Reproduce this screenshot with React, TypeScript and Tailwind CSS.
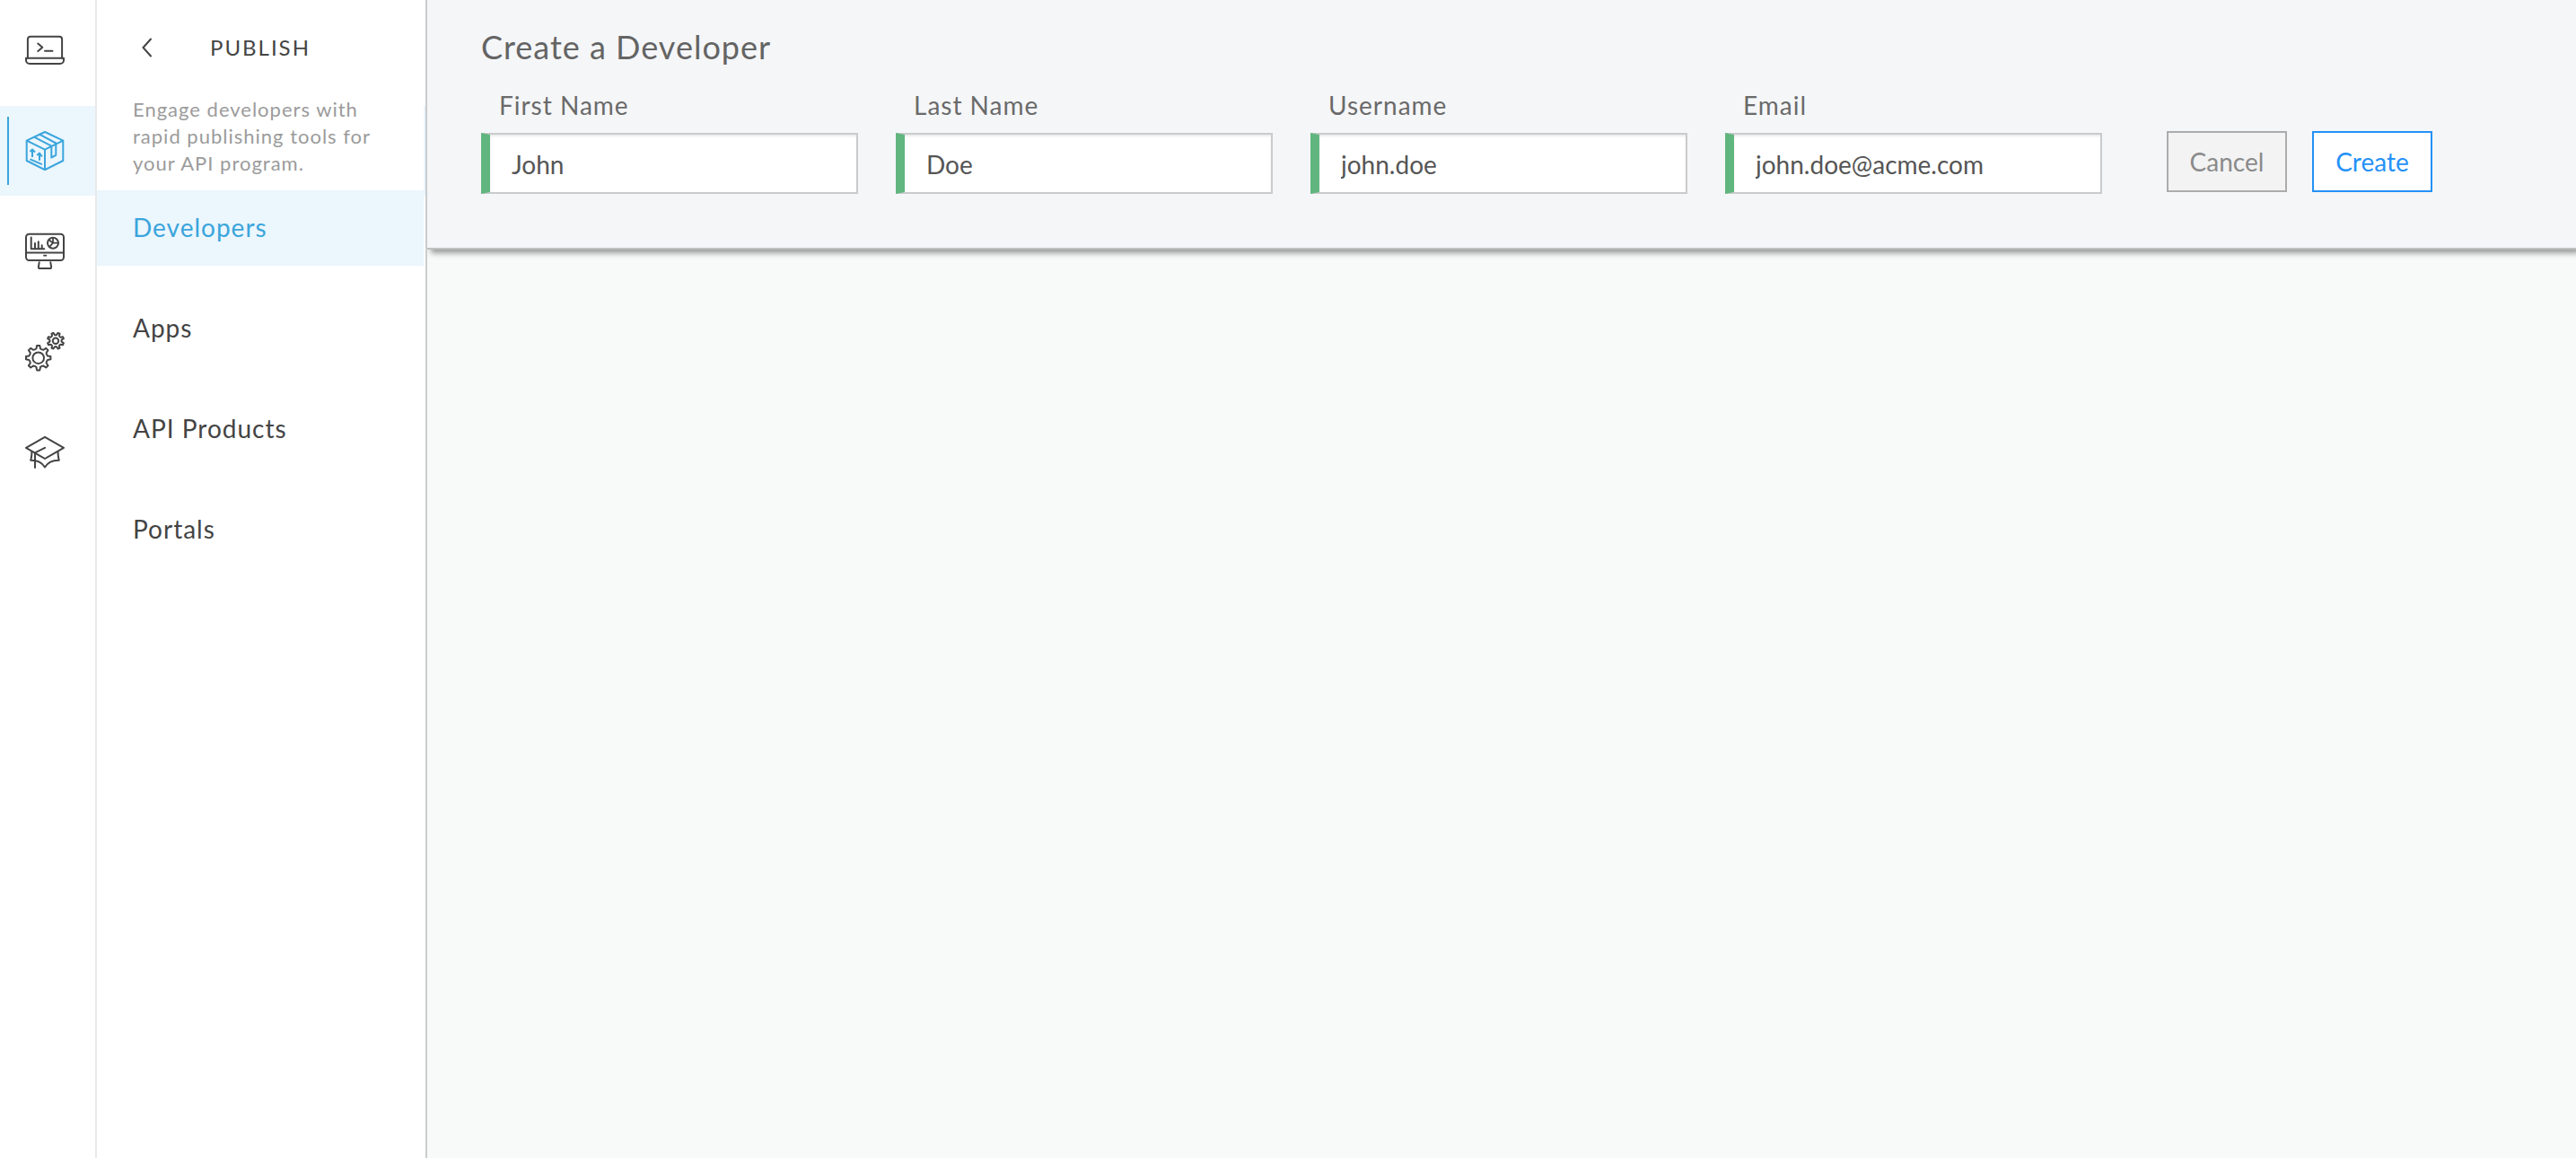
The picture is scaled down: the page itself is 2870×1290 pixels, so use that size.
import type { ReactNode } from "react";

function gearPath(cx: number, cy: number, outer: number, root: number, teeth: number, phase: number): string {
  const step = (Math.PI * 2) / teeth;
  const at = (r: number, a: number) => `${(cx + r * Math.cos(a)).toFixed(2)} ${(cy + r * Math.sin(a)).toFixed(2)}`;
  let d = "";
  for (let i = 0; i < teeth; i++) {
    const a = phase + i * step;
    d += `${i === 0 ? "M" : "L"}${at(root, a - step * 0.27)}`;
    d += `L${at(outer, a - step * 0.15)}L${at(outer, a + step * 0.15)}L${at(root, a + step * 0.27)}`;
    d += `Q${at(root - 1, a + step * 0.5)} ${at(root, a + step * 0.73)}`;
  }
  return d + "Z";
}

function Icon({ children }: { children: ReactNode }) {
  return (
    <svg
      viewBox="0 0 44 44"
      className="size-11"
      fill="none"
      stroke="currentColor"
      strokeWidth="2"
      strokeLinecap="round"
      strokeLinejoin="round"
      aria-hidden="true"
    >
      {children}
    </svg>
  );
}

const LaptopIcon = (
  <Icon>
    <path d="M2.9 30.7V9.7a3 3 0 0 1 3-3h32.2a3 3 0 0 1 3 3v21" />
    <path d="M1 30.7h42v2.3a4 4 0 0 1-4 4H5a4 4 0 0 1-4-4z" />
    <path d="M14.3 14.5l5 4.2-5 4.3M22 22.8h8.5" />
  </Icon>
);

const PackageIcon = (
  <Icon>
    <path d="M22 1L42.3 10.7V33L22 43.2 1.7 33V10.7zM1.7 10.7L22 20.7l20.3-10M22 20.7v22.5" />
    <path d="M16 3.7l18.3 9.8v13.3l-5 2.7V16.7L10 6.7" />
    <path d="M8 29v-8M5.5 23L8 20.5l3 3M16 32.8v-8M13.3 27l2.7-2.5 2.8 4M5.5 31.3l13.3 5.8" strokeLinecap="butt" />
  </Icon>
);

const MonitorIcon = (
  <Icon>
    <rect x="1" y="2.7" width="42" height="29.3" rx="3.5" />
    <path d="M1 23.5h42" strokeWidth="1.8" />
    <path d="M21 26.7h2.4" strokeWidth="1.8" />
    <path d="M15.7 34.3l-.8 4.9q-.2 1.8 1.4 1.8h11.4q1.6 0 1.4-1.8l-.8-4.9" />
    <path d="M6.7 6.5v12.8h14.6M11 19v-6M14.8 19v-7.7M18.7 19v-3.7" />
    <circle cx="31" cy="12.7" r="6" />
    <path d="M31 7v5.7h6M31 12.7l-4 4.4M31 12.7l-4.5-3.5" strokeWidth="1.8" />
  </Icon>
);

const GearsIcon = (
  <Icon>
    <path d={gearPath(14.7, 28.7, 13.8, 10.6, 8, 0)} />
    <circle cx="14.7" cy="28.7" r="6.3" />
    <path d={gearPath(34, 9.7, 9.2, 7, 8, Math.PI / 8)} />
    <circle cx="34" cy="9.7" r="3.2" />
  </Icon>
);

const LearnIcon = (
  <Icon>
    <path d="M22 4.8L43 16.8 22 29 1 16.8z" />
    <path d="M22 16.8l-11 5.6V39" />
    <path d="M7.4 21.5q0 5-1.2 9.3Q17 30.5 22 38.5q5-8 15.8-7.7-1.2-4.3-1.2-9.3" />
  </Icon>
);

const sections = [
  { name: "Develop", icon: LaptopIcon },
  { name: "Publish", icon: PackageIcon, active: true },
  { name: "Analyze", icon: MonitorIcon },
  { name: "Admin", icon: GearsIcon },
  { name: "Learn", icon: LearnIcon },
];

const pages = [{ name: "Developers", active: true }, { name: "Apps" }, { name: "API Products" }, { name: "Portals" }];

const fields = [
  { id: "first-name", label: "First Name", type: "text", value: "John" },
  { id: "last-name", label: "Last Name", type: "text", value: "Doe" },
  { id: "username", label: "Username", type: "text", value: "john.doe" },
  { id: "email", label: "Email", type: "email", value: "john.doe@acme.com" },
];

function Rail() {
  return (
    <nav aria-label="Sections" className="flex w-[108px] flex-col gap-3 border-r-2 border-[#eaeaea] pt-[6px] text-[#444444]">
      {sections.map((s) =>
        s.active ? (
          <a
            key={s.name}
            href="#"
            aria-label={s.name}
            aria-current="true"
            className="flex h-[100px] items-center bg-[#ebf6fd] pl-2 text-[#3ba5dc]"
          >
            {/* The highlight runs on beneath the section panel and shows at its right edge. */}
            <span className="absolute left-0 -z-10 h-[100px] w-full bg-[#ebf6fd]" />
            <span className="mr-[18px] h-[76px] w-[2px] bg-[#3ba5dc]" />
            {s.icon}
          </a>
        ) : (
          <a key={s.name} href="#" aria-label={s.name} className="flex h-[100px] items-center pl-7">
            {s.icon}
          </a>
        ),
      )}
    </nav>
  );
}

function SectionPanel() {
  return (
    <div className="mr-[2px] flex-1 bg-white tracking-[1px] text-[#444444]">
      <div className="flex h-[105px] items-center pl-[50px]">
        <button type="button" aria-label="Back" className="mr-16 cursor-pointer">
          <svg viewBox="0 0 12 22" className="h-[22px] w-3" fill="none" stroke="currentColor" strokeWidth="2" strokeLinecap="round" aria-hidden="true">
            <path d="M10 1.5L1.5 11l8.500 9.500" />
          </svg>
        </button>
        <h1 className="text-[24px] tracking-[2px]">PUBLISH</h1>
      </div>
      <p className="mt-[2px] pr-12 pl-10 text-[22px] leading-[30px] text-[#9b9b9b]">
        Engage developers with rapid publishing tools for your API program.
      </p>
      <nav aria-label="Publish" className="mt-[15px] flex flex-col gap-7">
        {pages.map((p) =>
          p.active ? (
            <a key={p.name} href="#" aria-current="page" className="flex h-[84px] items-center bg-[#ebf6fd] pb-[2px] pl-10 text-[28px] text-[#3ba5dc]">
              {p.name}
            </a>
          ) : (
            <a key={p.name} href="#" className="flex h-[84px] items-center pb-[2px] pl-10 text-[28px]">
              {p.name}
            </a>
          ),
        )}
      </nav>
    </div>
  );
}

function CreateDeveloper() {
  return (
    <form className="border-b-2 border-[#bfc0c1] bg-[#f5f6f8] pt-[30px] pr-40 pb-[60px] pl-[60px] shadow-[4px_4px_6px_#999999]">
      <h2 className="text-[36px] leading-[44px] tracking-[1px] text-[#646464]">Create a Developer</h2>
      <div className="mt-[25px] flex items-end">
        <div className="grid flex-1 grid-cols-4 gap-[42px]">
          {fields.map((f) => (
            <div key={f.id} className="flex flex-col gap-[13px]">
              <label htmlFor={f.id} className="pl-5 text-[28px] leading-[36px] tracking-[1px] text-[#6a6a6a]">
                {f.label}
              </label>
              <input
                id={f.id}
                type={f.type}
                defaultValue={f.value}
                className="h-[68px] w-full border-2 border-l-[10px] border-[#cacbcc] border-l-[#61b67f] bg-white px-6 pt-[2px] text-[28px] text-[#555555] shadow-[inset_0_2px_2px_rgba(0,0,0,0.08)] outline-none"
              />
            </div>
          ))}
        </div>
        <div className="mb-[2px] ml-[72px] flex gap-7 text-[28px]">
          <button type="button" className="h-[68px] w-[134px] cursor-pointer border-2 border-[#acacac] bg-[#f3f3f3] text-[#8a8a8a]">
            Cancel
          </button>
          <button type="submit" className="h-[68px] w-[134px] cursor-pointer border-2 border-[#2491f7] bg-white text-[#2491f7]">
            Create
          </button>
        </div>
      </div>
    </form>
  );
}

export default function App() {
  return (
    <div className="flex min-h-screen bg-[#f8faf9] font-['Lato',sans-serif]">
      <aside className="relative isolate flex w-[476px] shrink-0 border-r-2 border-[#cacbcd] bg-white">
        <Rail />
        <SectionPanel />
      </aside>
      <main className="min-w-0 flex-1 overflow-hidden">
        <CreateDeveloper />
      </main>
    </div>
  );
}
